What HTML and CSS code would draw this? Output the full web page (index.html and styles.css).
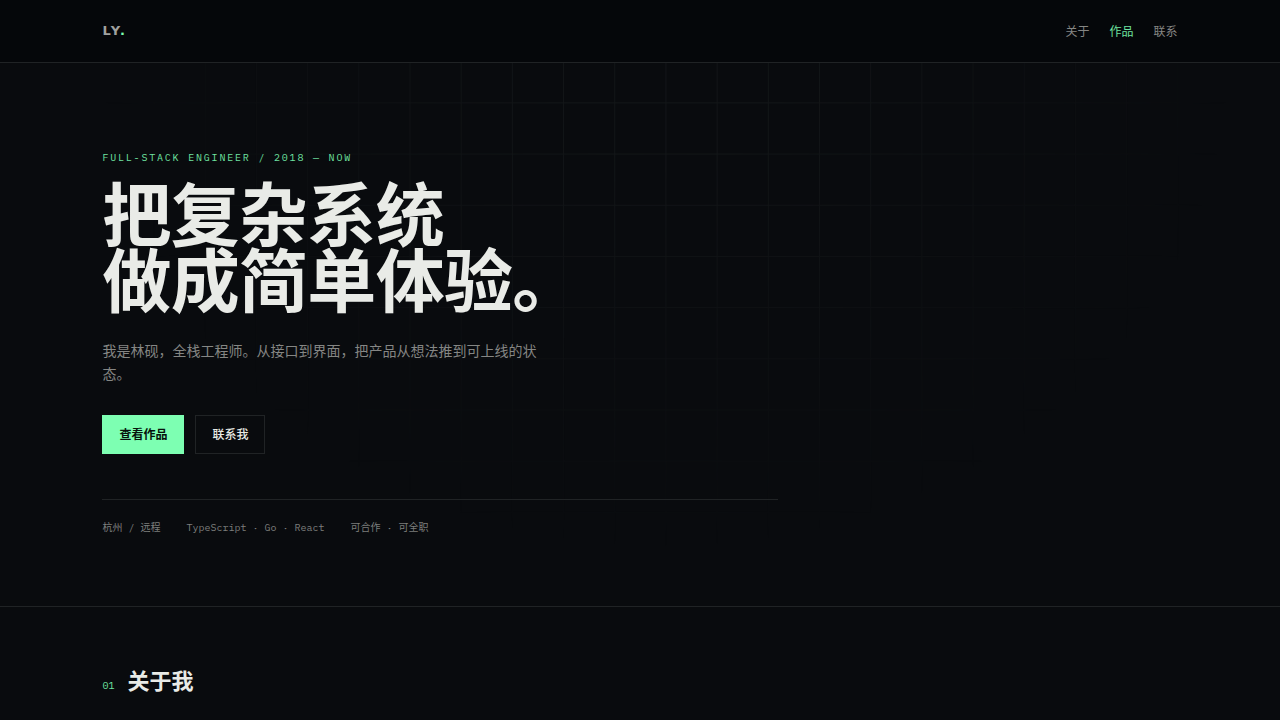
FILE: index.html
```html
<!DOCTYPE html>
<html lang="zh-CN">
<head>
<meta charset="utf-8">
<meta name="viewport" content="width=device-width, initial-scale=1">
<title>林砚 — 全栈工程师</title>
<link rel="stylesheet" href="styles.css">
</head>
<body>
<header class="site-header">
  <a class="logo" href="#top">LY<span class="logo-dot">.</span></a>
  <nav class="nav" aria-label="主导航">
    <a class="nav-link" href="#about">关于</a>
    <a class="nav-link nav-link-active" href="#work">作品</a>
    <a class="nav-link" href="#contact">联系</a>
  </nav>
</header>
<main id="top">
  <section class="hero">
    <div class="hero-content">
      <p class="eyebrow">FULL-STACK ENGINEER / 2018 — NOW</p>
      <h1 class="hero-title">把复杂系统<br>做成简单体验。</h1>
      <p class="hero-lead">我是林砚，全栈工程师。从接口到界面，把产品从想法推到可上线的状态。</p>
      <div class="actions">
        <button class="button button-primary" type="button">查看作品</button>
        <button class="button" type="button">联系我</button>
      </div>
      <ul class="meta">
        <li>杭州 / 远程</li>
        <li>TypeScript · Go · React</li>
        <li>可合作 · 可全职</li>
      </ul>
    </div>
  </section>
  <section class="section" id="about">
    <div class="section-heading">
      <span class="section-number">01</span>
      <h2 class="section-title">关于我</h2>
    </div>
  </section>
</main>
</body>
</html>
```

FILE: styles.css
```css
:root {
  --bg: #090b0e;
  --header-bg: #05070a;
  --text: #e9ebe7;
  --muted: #858684;
  --line: #202325;
  --accent: #7dffb2;
  --accent-text: #6fe3a1;
  --gutter: 8vw;
  --sans: "Noto Sans CJK SC", sans-serif;
  --mono: "IBM Plex Mono", "Liberation Mono", "Noto Sans CJK SC", monospace;
}

* {
  box-sizing: border-box;
}

body {
  position: relative;
  margin: 0;
  min-height: 100vh;
  background: var(--bg);
  color: var(--text);
  font-family: var(--sans);
}

/* Faint grid that fades out around the hero */
body::before {
  content: "";
  position: absolute;
  inset: 0;
  z-index: -1;
  background-image:
    linear-gradient(to right, #131618 1px, transparent 1px),
    linear-gradient(to bottom, #131618 1px, transparent 1px);
  background-size: 4vw 4vw;
  mask-image: radial-gradient(ellipse 44% 68% at 52% 8%, #000 20%, transparent 100%);
}

a {
  color: inherit;
  text-decoration: none;
}

h1,
h2,
p,
ul {
  margin: 0;
  padding: 0;
}

.site-header {
  position: sticky;
  top: 0;
  z-index: 1;
  display: flex;
  align-items: center;
  justify-content: space-between;
  padding: 21px var(--gutter);
  border-bottom: 1px solid var(--line);
  background: var(--header-bg);
}

.logo {
  color: #a0a19f;
  font: bold 13px/20px "DejaVu Sans", sans-serif;
  font-kerning: none;
}

.logo-dot {
  color: var(--accent);
}

.nav {
  display: flex;
  gap: 20px;
}

.nav-link {
  color: var(--muted);
  font-size: 12px;
  line-height: 20px;
}

.nav-link-active {
  color: var(--accent-text);
}

.hero {
  padding: 87px var(--gutter) 71px;
  border-bottom: 1px solid var(--line);
}

.hero-content {
  max-width: 676px;
}

.eyebrow {
  color: var(--accent-text);
  font-family: var(--mono);
  font-size: 10px;
  line-height: 16px;
  letter-spacing: 0.18em;
}

.hero-title {
  margin-top: 12px;
  font-size: 69px;
  font-weight: 700;
  line-height: 66px;
  letter-spacing: -0.01em;
}

.hero-lead {
  max-width: 448px;
  margin-top: 29px;
  color: var(--muted);
  font-size: 14px;
  line-height: 23px;
}

.actions {
  display: flex;
  gap: 11px;
  margin-top: 30px;
}

.button {
  padding: 9px 16px 10px;
  border: 1px solid var(--line);
  background: transparent;
  color: var(--text);
  font-family: var(--sans);
  font-size: 12px;
  font-weight: 500;
  line-height: 18px;
}

.button-primary {
  border-color: var(--accent);
  background: var(--accent);
  color: #07120c;
  font-weight: 700;
}

.meta {
  display: flex;
  flex-wrap: wrap;
  gap: 26px;
  margin-top: 45px;
  padding-top: 21px;
  border-top: 1px solid var(--line);
  color: #7c7e7c;
  font-family: var(--mono);
  font-size: 10px;
  line-height: 14px;
  list-style: none;
}

.section {
  padding: 56px var(--gutter) 22px;
}

.section-heading {
  display: flex;
  align-items: baseline;
  gap: 13px;
}

.section-number {
  color: var(--accent-text);
  font-family: var(--mono);
  font-size: 10px;
}

.section-title {
  font-size: 22px;
  font-weight: 700;
  line-height: 32px;
}
```
